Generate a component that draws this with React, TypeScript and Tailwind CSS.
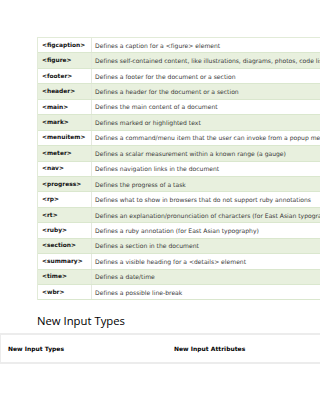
import React from "react";

const rows: [string, string][] = [
  ["<figcaption>", "Defines a caption for a <figure> element"],
  ["<figure>", "Defines self-contained content, like illustrations, diagrams, photos, code listings, etc."],
  ["<footer>", "Defines a footer for the document or a section"],
  ["<header>", "Defines a header for the document or a section"],
  ["<main>", "Defines the main content of a document"],
  ["<mark>", "Defines marked or highlighted text"],
  ["<menuitem>", "Defines a command/menu item that the user can invoke from a popup menu"],
  ["<meter>", "Defines a scalar measurement within a known range (a gauge)"],
  ["<nav>", "Defines navigation links in the document"],
  ["<progress>", "Defines the progress of a task"],
  ["<rp>", "Defines what to show in browsers that do not support ruby annotations"],
  ["<rt>", "Defines an explanation/pronunciation of characters (for East Asian typography)"],
  ["<ruby>", "Defines a ruby annotation (for East Asian typography)"],
  ["<section>", "Defines a section in the document"],
  ["<summary>", "Defines a visible heading for a <details> element"],
  ["<time>", "Defines a date/time"],
  ["<wbr>", "Defines a possible line-break"],
];

export default function App() {
  return (
    <div className="h-[414px] w-[320px] overflow-hidden bg-white font-['DejaVu_Sans',Verdana,sans-serif]">
      <div className="pl-[37px] pt-[37px]">
        <div className="w-[420px] border-l border-t border-[#e2ebd8]">
          {rows.map(([tag, desc], i) => (
            <div
              key={tag}
              className={
                i % 2 === 1
                  ? "grid h-[15.44px] grid-cols-[54px_1fr] items-center border-b border-[#dae7ce] bg-[#e8f0de]"
                  : "grid h-[15.44px] grid-cols-[54px_1fr] items-center border-b border-[#dae7ce] bg-white"
              }
            >
              <div className="flex h-full items-center border-r border-[#e4e9de] pl-[4px] text-[5.9px] font-bold text-[#111]">
                {tag}
              </div>
              <div className="whitespace-nowrap pl-[3px] text-[6.05px] text-[#3a3a3a]">{desc}</div>
            </div>
          ))}
        </div>
      </div>

      <h2 className="mt-[13px] pl-[37px] font-['Open_Sans',sans-serif] text-[11.3px] leading-[16px] text-black">
        New Input Types
      </h2>

      <div className="mt-[4px] grid w-[333px] grid-cols-2 border-y-2 border-l border-[#ececec] text-[6px] font-bold text-black">
        <div className="flex h-[27px] items-center pl-[7px]">New Input Types</div>
        <div className="flex h-[27px] items-center pl-[7px]">New Input Attributes</div>
      </div>
    </div>
  );
}
